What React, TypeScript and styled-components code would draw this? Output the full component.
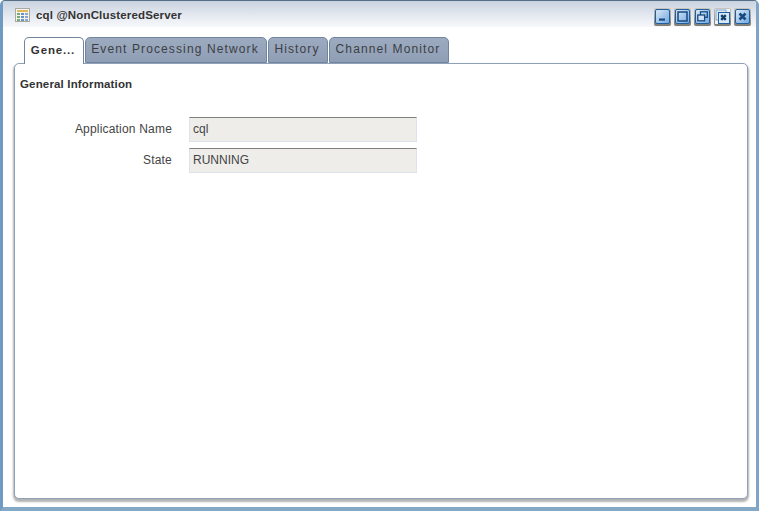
import React from "react";
import styled, { createGlobalStyle } from "styled-components";

const Global = createGlobalStyle`
  html, body { margin: 0; padding: 0; background: #fff; }
  body { font-family: "Liberation Sans", Arial, sans-serif; }
  * { box-sizing: border-box; }
`;

const Win = styled.div`
  width: 759px; height: 511px; display: flex; flex-direction: column;
  background: #fff; overflow: hidden;
  border-left: 3px solid #6f9ac2; border-right: 3px solid #7fa5c6;
  border-bottom: 4px solid #84a9c6; border-top: 1px solid #566f86;
  border-top-left-radius: 5px; border-top-right-radius: 5px;
`;
const TitleBar = styled.div`
  height: 26px; flex: none; display: flex; align-items: center;
  padding: 0 5px 0 12px;
  background: linear-gradient(#c9d3e0, #e6eaf1 60%, #f7f8fa);
`;
const TitleIcon = styled.svg`width: 15px; height: 14px; flex: none; margin-right: 6px; margin-top: 1px;`;
const TitleText = styled.div`
  font-size: 11.5px; font-weight: 700; color: #333; flex: 1; white-space: nowrap;
  letter-spacing: 0.16px; padding-top: 1px;
`;
const Controls = styled.div`display: flex; gap: 3px; padding-top: 6px;`;
const Ctl = styled.div`
  width: 17px; height: 18px; border-radius: 2px; padding: 1px 1px 2px;
  background: linear-gradient(#c8c6bc, #7d7b72);
  svg { display: block; width: 15px; height: 15px; }
`;
const Body = styled.div`
  flex: 1; display: flex; flex-direction: column; padding: 10px 8px 8px 11px; min-height: 0;
`;
const Tabs = styled.div`display: flex; padding-left: 10px; gap: 1px; height: 26px; flex: none; position: relative; z-index: 1;`;
const Tab = styled.div<{ $active?: boolean; $w: number }>`
  width: ${p => p.$w}px; height: ${p => (p.$active ? 27 : 26)}px;
  display: flex; align-items: center; justify-content: center; padding: 0 2px 2px 0;
  font-size: ${p => (p.$active ? 11.5 : 12)}px; letter-spacing: ${p => (p.$active ? "0.85px" : "1.12px")};
  font-weight: ${p => (p.$active ? 700 : 400)};
  color: ${p => (p.$active ? "#333" : "#3c3f44")};
  white-space: nowrap;
  border: 1px solid #72859f; border-bottom: ${p => (p.$active ? "none" : "1px solid #72859f")};
  border-radius: 5px 5px 0 0;
  background: ${p => (p.$active ? "#fff" : "linear-gradient(#9dabc0, #8f9eb5)")};
`;
const Panel = styled.div`
  flex: 1; min-height: 0; background: #fff; padding: 13px 5px;
  border: 1px solid #8fa0b8; border-radius: 5px;
  box-shadow: 0 2px 2px 1px #b3b3b3;
`;
const Heading = styled.div`font-size: 11.5px; font-weight: 700; color: #333; line-height: 14px; margin-bottom: 26px; letter-spacing: 0.16px;`;
const Form = styled.div`
  display: grid; grid-template-columns: 152px 228px; column-gap: 17px; row-gap: 6px; align-items: center;
`;
const Label = styled.div`font-size: 12px; color: #444; text-align: right; letter-spacing: 0.19px; padding-bottom: 1px;`;
const Field = styled.div`
  height: 25px; display: flex; align-items: center; padding: 0 3px 1px;
  font-size: 12px; color: #444; background: #eeedea;
  border: 1px solid #dde3ee; border-top: 1px solid #7f7f7f;
`;

const CtlBase = ({ children }: { children: React.ReactNode }) => (
  <Ctl>
    <svg viewBox="0 0 15 15">
      <defs>
        <linearGradient id="g" x1="0" y1="0" x2="1" y2="1">
          <stop offset="0" stopColor="#dcebf9" />
          <stop offset="1" stopColor="#6fa6dc" />
        </linearGradient>
      </defs>
      <rect x="0.5" y="0.5" width="14" height="14" rx="1.5" fill="url(#g)" stroke="#1f5f9f" />
      {children}
    </svg>
  </Ctl>
);

const App = () => (
  <>
    <Global />
    <Win>
      <TitleBar>
        <TitleIcon viewBox="0 0 15 14">
          <rect x="0.5" y="0.5" width="14" height="13" fill="#f4f4f0" stroke="#a9a9a4" />
          <rect x="2" y="2" width="11" height="2" fill="#e0b95c" />
          {[5, 8, 11].map(y =>
            [2, 6, 10].map((x, i) => (
              <rect key={`${x}-${y}`} x={x} y={y} width="3" height="2" fill={i === 0 ? "#77aa72" : i === 1 ? "#6a90c8" : "#8aa6d0"} />
            ))
          )}
        </TitleIcon>
        <TitleText>cql @NonClusteredServer</TitleText>
        <Controls>
          <CtlBase><rect x="4" y="9.5" width="6" height="2.2" fill="#174a80" /></CtlBase>
          <CtlBase><rect x="3" y="3" width="9" height="9" fill="none" stroke="#174a80" strokeWidth="1.5" /></CtlBase>
          <CtlBase>
            <rect x="5.5" y="2.8" width="6.8" height="5.5" fill="none" stroke="#174a80" strokeWidth="1.3" />
            <rect x="2.8" y="6" width="6.8" height="5.8" fill="#cfe2f5" stroke="#174a80" strokeWidth="1.3" />
          </CtlBase>
          <CtlBase>
            <rect x="0" y="0" width="15" height="15" fill="#eef3f9" />
            <rect x="1" y="1" width="10" height="10" fill="#dbe8f6" stroke="#7fa6cc" />
            <rect x="3.5" y="3.5" width="11" height="11" fill="#d8e8f8" stroke="#1f5f9f" />
            <path d="M6.2 6.2l4.6 4.6M10.8 6.2l-4.6 4.6" stroke="#123f70" strokeWidth="2.4" />
          </CtlBase>
          <CtlBase><path d="M4.5 4.5l6 6M10.5 4.5l-6 6" stroke="#174a80" strokeWidth="2.6" /></CtlBase>
        </Controls>
      </TitleBar>
      <Body>
        <Tabs>
          <Tab $active $w={60}>Gene...</Tab>
          <Tab $w={182}>Event Processing Network</Tab>
          <Tab $w={60}>History</Tab>
          <Tab $w={120}>Channel Monitor</Tab>
        </Tabs>
        <Panel>
          <Heading>General Information</Heading>
          <Form>
            <Label>Application Name</Label>
            <Field>cql</Field>
            <Label>State</Label>
            <Field>RUNNING</Field>
          </Form>
        </Panel>
      </Body>
    </Win>
  </>
);

export default App;
